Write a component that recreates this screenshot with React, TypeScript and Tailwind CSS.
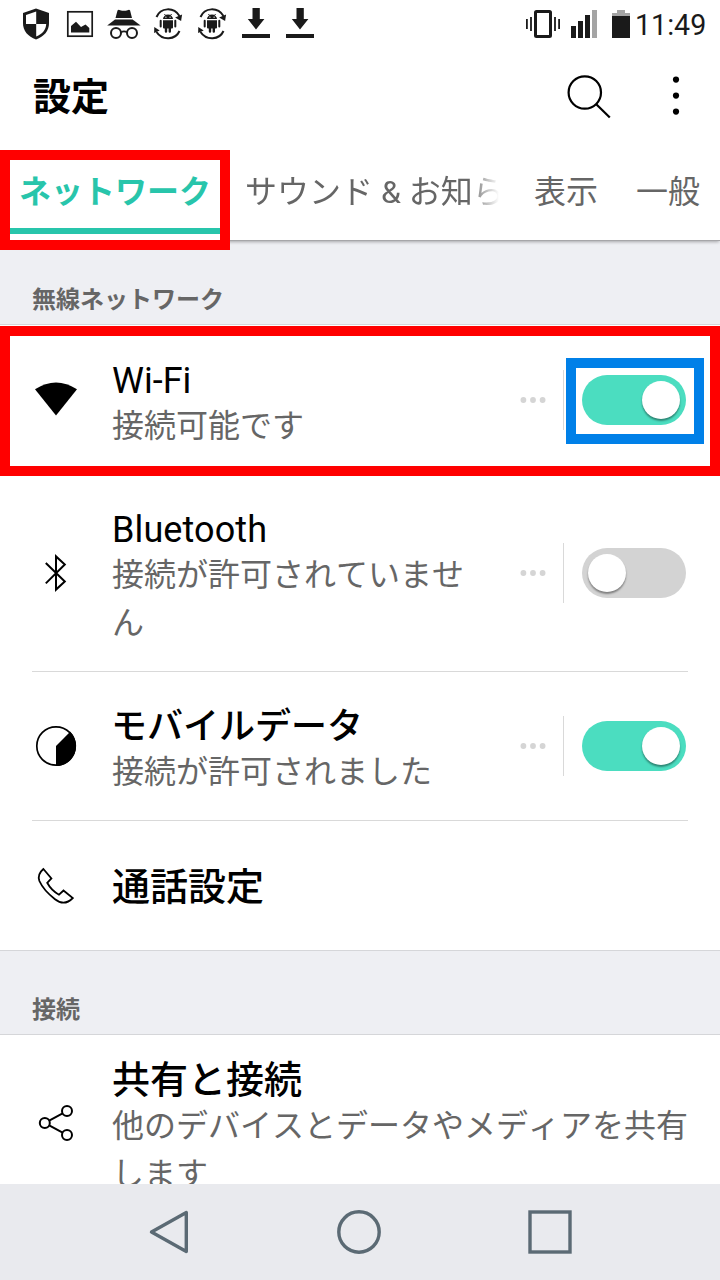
import type { ReactNode } from "react";

const INK = "#1a1a1a";

function StatusIcons() {
  const android = (x: number) => (
    <g transform={`translate(${x} 0)`}>
      <path d="M3 17 C7 7.5 20 6.5 26 16" fill="none" stroke={INK} strokeWidth="2" />
      <path d="M28.6 14.6 L27.6 21 L21.6 17.6 Z" fill={INK} />
      <path d="M26 31 C22 40 9 41 3 32" fill="none" stroke={INK} strokeWidth="2" />
      <path d="M.6 33 L.8 27 L6.2 30.4 Z" fill={INK} />
      <path d="M9.5 19 a5 4.4 0 0 1 10 0 Z M9.5 20.2 h10 v7.4 q0 1-1 1 h-1 v3 q0 1.2-1.2 1.2 t-1.2-1.2 v-3 h-1.4 v3 q0 1.2-1.2 1.2 t-1.2-1.2 v-3 h-.8 q-1 0-1-1 Z" fill={INK} />
      <path d="M11 14 l1 1.6 M18 14 l-1 1.6" stroke={INK} strokeWidth="1" />
      <path d="M7.2 20.8 v5.6 M21.8 20.8 v5.6" stroke={INK} strokeWidth="2" strokeLinecap="round" />
      <circle cx="12.4" cy="17.2" r=".6" fill="#fff" />
      <circle cx="16.6" cy="17.2" r=".6" fill="#fff" />
    </g>
  );
  const download = (x: number) => (
    <path transform={`translate(${x} 0)`} d="M10.5 8 h7.3 v11 h4.6 L14 29.6 L5.8 19 h4.7 Z M0 34 h28 v4 H0 Z" fill={INK} />
  );
  return (
    <svg width="330" height="48" viewBox="0 0 330 48" className="shrink-0">
      <path d="M36 8.4 L49 13 V23 C49 31 44 36.5 36 39.6 C28 36.5 23 31 23 23 V13 Z" fill={INK} />
      <path d="M36.2 11.6 V24 H26 V15 Z M36.2 24 H46.2 C46 29.5 42.5 34 36.2 36.6 Z" fill="#fff" />
      <rect x="67.8" y="11.8" width="24.4" height="24.4" fill="none" stroke={INK} strokeWidth="1.7" />
      <path d="M71 32.5 V26 L76 21.8 L81 27 L85.5 24.6 L89.3 28 V32.5 Z" fill={INK} />
      <path d="M117.5 10.4 q1-1.4 2.6-.2 q4 1.2 7.4 0 q1.8-1.2 2.6.2 L132 18 H115.5 Z" fill={INK} />
      <path d="M115 19.6 h17.6 l8 5.8 h-33.4 Z" fill={INK} />
      <circle cx="116" cy="33" r="5" fill="none" stroke={INK} strokeWidth="2" />
      <circle cx="132" cy="33" r="5" fill="none" stroke={INK} strokeWidth="2" />
      <path d="M121 32.2 q3-1.6 6 0" fill="none" stroke={INK} strokeWidth="1.6" />
      {android(153.5)}
      {android(197.5)}
      {download(242)}
      {download(286)}
    </svg>
  );
}

function SystemIcons() {
  return (
    <svg width="106" height="48" viewBox="0 0 106 48" className="shrink-0">
      <path d="M.9 19 v10 M5 17 v14 M29 17 v14 M33.1 19 v10" stroke={INK} strokeWidth="1.8" />
      <rect x="9.5" y="11.5" width="15" height="25" rx="1" fill="none" stroke={INK} strokeWidth="3" />
      <path d="M45 26 h5 v12 h-5 Z M52 21 h5 v17 h-5 Z M59 15 h5 v23 h-5 Z" fill={INK} />
      <path d="M66 10 h5 v28 h-5 Z" fill="#a4a4a4" />
      <path d="M86 13 h5 v-3 h8 v3 h5 v4 h-18 Z" fill="#a4a4a4" />
      <path d="M86 16 h18 v22 h-18 Z" fill={INK} />
    </svg>
  );
}

function Switch({ on = false }: { on?: boolean }) {
  return (
    <div className={on ? "flex h-[50px] w-[104px] items-center justify-end rounded-full bg-[#4bddc0] px-1.5" : "flex h-[50px] w-[104px] items-center justify-start rounded-full bg-[#d3d3d3] px-1.5"}>
      <div className="size-[38px] rounded-full bg-white shadow-[0_2px_2px_rgba(0,0,0,0.4)]" />
    </div>
  );
}

function SwitchControls({ on, marked }: { on?: boolean; marked?: boolean }) {
  return (
    <div className="flex h-full items-center">
      <svg width="26" height="6" viewBox="0 0 26 6">
        <circle cx="3.4" cy="3" r="2.9" fill="#d5d5d5" />
        <circle cx="13" cy="3" r="2.9" fill="#d5d5d5" />
        <circle cx="22.6" cy="3" r="2.9" fill="#d5d5d5" />
      </svg>
      <div className="ml-[17px] h-[60px] w-px bg-[#d9d9d9]" />
      <div className="relative ml-[18px]">
        <Switch on={on} />
        {marked && <div className="absolute -left-4 -top-[17px] h-[86px] w-[138px] border-[10px] border-[#0080e8]" />}
      </div>
    </div>
  );
}

function Row({ icon, title, summary, className, titleClass, wide, children }: {
  icon: ReactNode; title: string; summary?: string; className: string; titleClass: string; wide?: boolean; children?: ReactNode;
}) {
  return (
    <div className={`relative flex shrink-0 bg-white ${className}`}>
      <div className="flex h-full w-28 shrink-0 items-center pl-8">
        <svg width="48" height="48" viewBox="0 0 48 48" fill="none" stroke="#000" strokeWidth="2">{icon}</svg>
      </div>
      <div className={wide ? "w-[590px] shrink-0" : "w-[408px] shrink-0"}>
        <div className={`whitespace-nowrap text-black ${titleClass}`}>{title}</div>
        {summary && <div className={wide ? "w-[580px] text-[32px] leading-[48px] text-[#666] [font-kerning:none]" : "w-[365px] text-[32px] leading-[48px] text-[#666] [font-kerning:none]"}>{summary}</div>}
      </div>
      {children}
    </div>
  );
}

function SectionHeader({ title, className }: { title: string; className: string }) {
  return <div className={`shrink-0 border-b border-[#d5d6d9] bg-[#eeeff3] pl-8 text-2xl font-bold text-[#666] ${className}`}>{title}</div>;
}

export default function App() {
  return (
    <div className="relative flex h-[1280px] w-[720px] flex-col overflow-hidden bg-white font-[Roboto,'Noto_Sans_CJK_JP',sans-serif]">
      <div className="flex h-12 shrink-0 items-center">
        <StatusIcons />
        <div className="ml-[196px] flex items-center">
          <SystemIcons />
          <span className="ml-[3px] pt-[2px] text-[28.6px] leading-8 text-[#1a1a1a]">11:49</span>
        </div>
      </div>

      <header className="flex h-[102px] shrink-0 items-start justify-between pl-[33px]">
        <h1 className="pt-[22px] text-[38px] font-bold leading-[54px] text-black">設定</h1>
        <svg width="160" height="100" viewBox="0 0 160 100" fill="none" stroke="#000" strokeWidth="2.2">
          <circle cx="24.8" cy="44.5" r="16.2" />
          <path d="M36 56 L49.8 69.5" />
          <g fill="#000" stroke="none">
            <circle cx="116" cy="31.6" r="3.1" />
            <circle cx="116" cy="47.6" r="3.1" />
            <circle cx="116" cy="63.6" r="3.1" />
          </g>
        </svg>
      </header>

      <nav className="relative z-10 flex h-[91px] shrink-0 border-b border-[#a6a6a9] bg-white text-[32px] leading-[84px] text-[#666] shadow-[0_2px_3px_-1px_rgba(0,0,0,0.3)]">
        <div className="relative w-[230px] shrink-0 pl-[19px] font-bold text-[#28c5ab]">
          <div className="h-[78px] whitespace-nowrap">ネットワーク</div>
          <div className="-ml-[19px] h-1.5 bg-[#28c5ab]" />
          <div className="absolute left-0 top-0 h-[100px] w-[230px] border-[10px] border-[#f00]" />
        </div>
        <div className="ml-[15px] w-[254px] shrink-0 whitespace-nowrap [mask-image:linear-gradient(to_right,#000_88%,transparent)]">サウンド &amp; お知ら</div>
        <div className="ml-[35px] w-16 shrink-0">表示</div>
        <div className="ml-[38px] w-16 shrink-0">一般</div>
      </nav>

      <SectionHeader title="無線ネットワーク" className="h-[84px] pt-[41px] leading-9" />

      <Row
        className="z-10 h-[150px]"
        titleClass="pt-[35px] text-[36px] leading-[42px]"
        title="Wi-Fi"
        summary="接続可能です"
        icon={<path d="M3 13.8 Q24 .2 45 13.8 L24 40 Z" transform="translate(0 -.5)" fill="#000" stroke="none" />}
      >
        <SwitchControls on marked />
        <div className="absolute left-0 top-px h-[150px] w-[720px] border-[10px] border-[#f00]" />
      </Row>
      <Row
        className="h-[196px]"
        titleClass="pt-[34px] text-[36px] leading-[42px] tracking-[0.1px]"
        title="Bluetooth"
        summary="接続が許可されていません"
        icon={<path d="M13.8 14 L32.8 32.5 L24 40.6 V7.4 L32.8 15.5 L13.8 34.4" />}
      >
        <SwitchControls />
      </Row>
      <div className="mx-8 h-px shrink-0 bg-[#d9d9d9]" />
      <Row
        className="h-[148px]"
        titleClass="-ml-px pt-[34px] text-[36px] font-medium leading-[42px]"
        title="モバイルデータ"
        summary="接続が許可されました"
        icon={<><circle cx="24" cy="24" r="19.2" strokeWidth="1.7" /><path d="M24 24 L38.2 9.8 A20 20 0 0 1 24 44 Z" fill="#000" stroke="none" /></>}
      >
        <SwitchControls on />
      </Row>
      <div className="mx-8 h-px shrink-0 bg-[#d9d9d9]" />
      <Row
        className="h-[129px]"
        titleClass="pt-[39px] text-[38px] font-medium leading-[54px]"
        title="通話設定"
        icon={<path d="M11.4 7 L19.4 16.5 L15.2 20.8 C18 26 22 30 27 32.7 L31.5 28.5 L40.8 36 C35 42 29 42 23 37.2 C17 32.5 10.5 26 7.4 19 C5.8 14.5 7.2 10.5 11.4 7 Z" strokeWidth="1.8" />}
      />
      <SectionHeader title="接続" className="h-[85px] border-t pt-[41px] leading-9" />
      <Row
        className="h-[176px]"
        wide
        titleClass="pt-[23px] text-[38px] font-medium leading-[44px]"
        title="共有と接続"
        summary="他のデバイスとデータやメディアを共有します"
        icon={<><circle cx="12.8" cy="24" r="5" /><circle cx="35" cy="12" r="5" /><circle cx="35" cy="36" r="5" /><path d="M17.2 21.6 L30.6 14.4 M17.2 26.4 L30.6 33.6" /></>}
      />

      <footer className="absolute bottom-0 left-0 z-20 h-24 w-full bg-[#e9eaee]">
        <svg width="720" height="96" viewBox="0 0 720 96" fill="none" stroke="#5b6a74" strokeWidth="3.4">
          <path d="M186.3 28.5 V67.5 L151.5 48 Z" strokeLinejoin="round" />
          <circle cx="359" cy="48" r="20.2" />
          <rect x="530" y="28" width="40" height="40" />
        </svg>
      </footer>
    </div>
  );
}
